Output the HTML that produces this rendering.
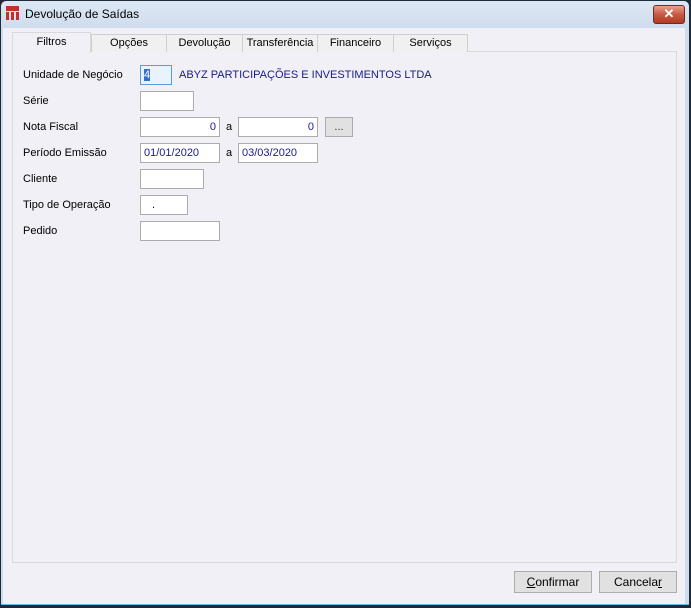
<html><head><style>
body{margin:0;width:691px;height:608px;overflow:hidden;background:#1c2a3a;font-family:"Liberation Sans",sans-serif;font-size:11px;}
.win{position:absolute;left:1px;top:1px;width:688px;height:603px;border-radius:5px 5px 0 0;background:linear-gradient(#dde8f5,#cfdcec 28px);border-bottom:1px solid #5fc3e0;}
.client{position:absolute;left:3px;top:28px;width:682px;height:576px;background:#f0f0f6;}
.abs{position:absolute;}
.tab{position:absolute;top:34px;height:17px;background:#f0f0f0;border:1px solid #cfcfcf;border-bottom:none;text-align:center;line-height:17px;color:#000;}
.panel{position:absolute;left:12px;top:51px;width:663px;height:510px;background:#f0f0f6;border:1px solid #d9d9d9;}
.lbl{position:absolute;left:23px;color:#000;}
.in{position:absolute;height:20px;box-sizing:border-box;border:1px solid #acacac;background:#fff;color:#1a1a8c;line-height:18px;padding:0 3px;}
.btn{position:absolute;top:571px;height:22px;box-sizing:border-box;border:1px solid #adadad;background:#e1e1e1;text-align:center;line-height:20px;font-size:12px;}
</style></head><body>
<div class="win"></div>
<div class="abs" style="left:6px;top:6px;width:13px;height:14px;">
<svg width="13" height="14"><rect x="0" y="0" width="13" height="5" fill="#c0302c"/><rect x="0" y="6" width="3" height="8" fill="#c0302c"/><rect x="5" y="6" width="3" height="8" fill="#c0302c"/><rect x="10" y="6" width="3" height="8" fill="#c0302c"/></svg></div>
<div class="abs" style="left:25px;top:7px;font-size:12px;color:#000;">Devolução de Saídas</div>
<div class="abs" style="left:653px;top:5px;width:30px;height:17px;border:1px solid #6a2d22;border-radius:3px;background:linear-gradient(#e8a18f,#c75a45 50%,#b33a25);color:#fff;text-align:center;font-weight:bold;font-size:13px;line-height:16px;">✕</div>
<div class="client"></div>
<div class="panel"></div>
<div class="tab" style="left:91px;width:74px;">Opções</div>
<div class="tab" style="left:166px;width:75px;">Devolução</div>
<div class="tab" style="left:242px;width:74px;">Transferência</div>
<div class="tab" style="left:317px;width:75px;">Financeiro</div>
<div class="tab" style="left:393px;width:73px;">Serviços</div>
<div class="tab" style="left:12px;top:32px;height:20px;width:77px;background:#f0f0f6;border-color:#d9d9d9;line-height:18px;">Filtros</div>
<div class="lbl" style="top:69px;">Unidade de Negócio</div>
<div class="in" style="left:140px;top:65px;width:32px;border-color:#569de5;background:#eaf3fc;"><span style="background:#3070d0;color:#fff;">4</span></div>
<div class="abs" style="left:179px;top:69px;color:#1a1a8c;">ABYZ PARTICIPAÇÕES E INVESTIMENTOS LTDA</div>
<div class="lbl" style="top:95px;">Série</div>
<div class="in" style="left:140px;top:91px;width:54px;"></div>
<div class="lbl" style="top:121px;">Nota Fiscal</div>
<div class="in" style="left:140px;top:117px;width:80px;text-align:right;">0</div>
<div class="abs" style="left:226px;top:121px;">a</div>
<div class="in" style="left:238px;top:117px;width:80px;text-align:right;">0</div>
<div class="in" style="left:325px;top:117px;width:28px;background:#e1e1e1;color:#333;text-align:center;">...</div>
<div class="lbl" style="top:147px;">Período Emissão</div>
<div class="in" style="left:140px;top:143px;width:80px;">01/01/2020</div>
<div class="abs" style="left:226px;top:147px;">a</div>
<div class="in" style="left:238px;top:143px;width:80px;">03/03/2020</div>
<div class="lbl" style="top:173px;">Cliente</div>
<div class="in" style="left:140px;top:169px;width:64px;"></div>
<div class="lbl" style="top:199px;">Tipo de Operação</div>
<div class="in" style="left:140px;top:195px;width:48px;color:#000;padding-left:11px;">.</div>
<div class="lbl" style="top:225px;">Pedido</div>
<div class="in" style="left:140px;top:221px;width:80px;"></div>
<div class="btn" style="left:514px;width:78px;"><u>C</u>onfirmar</div>
<div class="btn" style="left:599px;width:78px;">Cancela<u>r</u></div>
</body></html>
